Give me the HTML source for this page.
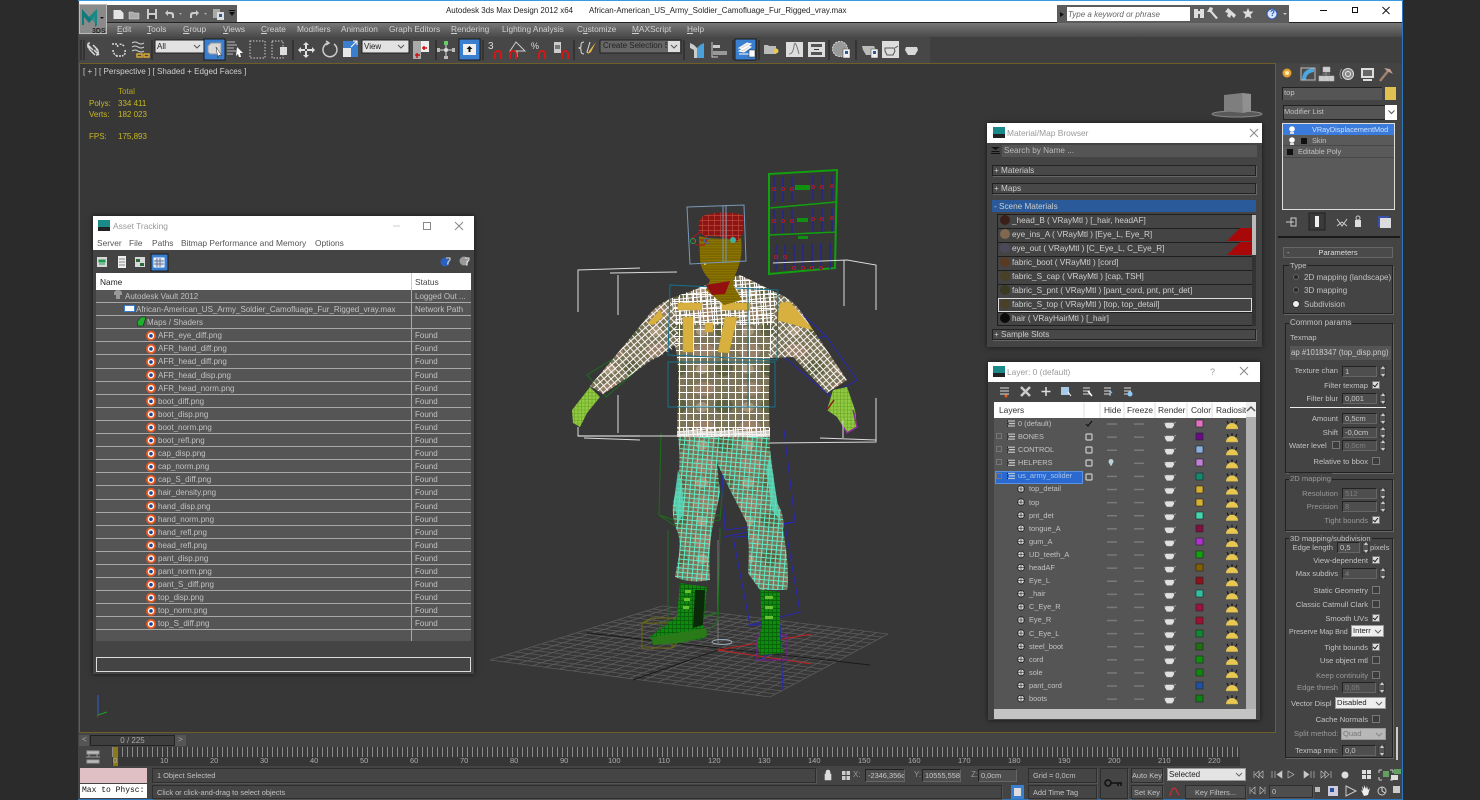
<!DOCTYPE html>
<html><head><meta charset="utf-8"><title>3ds Max</title>
<style>
html,body{margin:0;padding:0;width:1480px;height:800px;overflow:hidden;background:#2b2b2b;font:8px "Liberation Sans",sans-serif;color:#c2c2c2}
#all{position:absolute;left:0;top:0;width:1480px;height:800px;overflow:hidden;filter:blur(.25px)}
.a,.t,.b{position:absolute}
.t{white-space:nowrap;line-height:12px}
.b{box-sizing:border-box}
.r{text-align:right}
.inp{position:absolute;box-sizing:border-box;background:#4e4e4e;border:1px solid #222;border-right-color:#666;border-bottom-color:#666;height:11px;line-height:9px;padding-left:2px;color:#c8c8c8;white-space:nowrap;overflow:hidden}
.dis{color:#808080}
.cb{position:absolute;box-sizing:border-box;width:8px;height:8px;background:#3c3c3c;border:1px solid #777}
.cb.on{background:#ddd;border-color:#777}
.cb.on:after{content:"";position:absolute;left:1px;top:0;width:2px;height:4px;border:solid #222;border-width:0 1px 1px 0;transform:rotate(40deg)}
.sp{position:absolute;width:7px;height:11px;box-sizing:border-box;background:#555;border:1px solid #3a3a3a}
.sp:before,.sp:after{content:"";position:absolute;left:1px;border:2px solid transparent}
.sp:before{top:-1px;border-bottom:3px solid #ccc;border-top:0}
.sp:after{bottom:-1px;border-top:3px solid #ccc;border-bottom:0}
.dd{position:absolute;box-sizing:border-box;background:#eee;border:1px solid #999;color:#222;height:12px;line-height:10px;padding-left:1px;white-space:nowrap;overflow:hidden}
.gr{position:absolute;box-sizing:border-box;border:1px solid #222;box-shadow:1px 1px 0 #666}
.win{position:absolute;background:#444;box-shadow:0 0 5px rgba(0,0,0,.6)}
.ti{position:absolute;left:0;right:0;top:0;background:#fff;color:#888}
.row{height:13.1px;line-height:12px;padding-top:1px;box-sizing:border-box;white-space:nowrap}
.ar .row{border-bottom:1px solid #a8a8a8}
.m{position:absolute;top:23px;line-height:12px;color:#d0d0d0;font-size:8.3px;white-space:nowrap}
.box{position:absolute;box-sizing:border-box;background:#454545;border:1px solid #2e2e2e;box-shadow:1px 1px 0 #555;line-height:14px;white-space:nowrap;font-size:7.4px}
#rp .t{margin-top:1px;font-size:7.6px}
#rp .dd,#rp .inp{font-size:7.6px}
#mb .t{margin-top:1px;font-size:8.2px}
#lr .row{font-size:7.4px}
.st{font-size:7.4px}
.tn{position:absolute;top:755px;color:#b0b0b0;font-size:7.5px;line-height:12px}
</style></head><body><div id="all">

<!-- window frame -->
<div class="b" style="left:78px;top:0;width:1325px;height:800px;background:#444;border-top:1px solid #3a9ae0;border-right:1px solid #2a78c0;border-bottom:1px solid #2a78c0"></div>
<div class="a" style="left:79px;top:1px;width:1323px;height:21px;background:#fff"></div>
<div class="a" style="left:79px;top:22px;width:1323px;height:1px;background:#222"></div>
<div class="a" style="left:79px;top:23px;width:1323px;height:14px;background:linear-gradient(#777,#4a4a4a)"></div>
<div class="a" style="left:79px;top:37px;width:1323px;height:26px;background:#3f3f3f"></div>
<div class="a" style="left:79px;top:37px;width:851px;height:26px;background:#474747"></div>
<div class="a" style="left:79px;top:63px;width:1197px;height:670px;background:#373737;border:1px solid #6e5e28;box-sizing:border-box"></div>
<div class="a" style="left:1276px;top:63px;width:126px;height:697px;background:#444"></div>
<!-- timeline -->
<div class="a" style="left:79px;top:734px;width:1197px;height:13px;background:#444"></div>
<div class="a" style="left:79px;top:747px;width:1197px;height:20px;background:#444"></div>
<div class="a" style="left:112px;top:747px;width:1128px;height:19px;background:repeating-linear-gradient(90deg,#8a8a8a 0 1px,#3a3a3a 1px 5px) 0 0/100% 10px no-repeat,#363636"></div>

<!-- main svg: toolbar icons + viewport -->
<svg class="a" style="left:0;top:0" width="1480" height="800" viewBox="0 0 1480 800">
<defs>
<pattern id="sg" width="7" height="7" patternUnits="userSpaceOnUse"><path d="M0 .5H7M.5 0V7" stroke="#fff" stroke-width="1.100" fill="none"/></pattern>
<pattern id="sd" width="4.500" height="4" patternUnits="userSpaceOnUse" patternTransform="rotate(-6)"><path d="M0 .5H4.500M.5 0V4" stroke="#fff" stroke-width="1" fill="none"/></pattern>
<pattern id="sl" width="5" height="5" patternUnits="userSpaceOnUse" patternTransform="rotate(-42)"><path d="M0 .5H5M.5 0V5" stroke="#fff" stroke-width=".9" fill="none"/></pattern>
<pattern id="sr" width="5" height="5" patternUnits="userSpaceOnUse" patternTransform="rotate(48)"><path d="M0 .5H5M.5 0V5" stroke="#fff" stroke-width=".9" fill="none"/></pattern>
<pattern id="camo" width="46" height="38" patternUnits="userSpaceOnUse"><rect width="46" height="38" fill="#7c7458"/><ellipse cx="14" cy="9" rx="11" ry="7" fill="#9a8068"/><ellipse cx="34" cy="26" rx="9" ry="8" fill="#5e6040"/><ellipse cx="12" cy="27" rx="6" ry="5" fill="#a89478"/></pattern>
<pattern id="pg" width="4.800" height="4.400" patternUnits="userSpaceOnUse" patternTransform="rotate(5)"><path d="M0 .5H4.800M.5 0V4.400" stroke="#60ecca" stroke-width="1" fill="none"/></pattern>
<pattern id="rg" width="6" height="5" patternUnits="userSpaceOnUse"><rect width="6" height="5" fill="#8c1414"/><path d="M0 .5H6M.5 0V5" stroke="#b84838" stroke-width=".7"/></pattern>
<pattern id="fg" width="2.500" height="2.500" patternUnits="userSpaceOnUse"><rect width="2.500" height="2.500" fill="#7c6600"/><path d="M0 .3H2.500" stroke="#9a8000" stroke-width=".5"/></pattern>
<pattern id="bg" width="4" height="4" patternUnits="userSpaceOnUse"><rect width="4" height="4" fill="#0c8c0c"/><path d="M0 .5H4M.5 0V4" stroke="#0a5a0a" stroke-width=".7"/></pattern>
<pattern id="hg" width="3.500" height="3.500" patternUnits="userSpaceOnUse"><rect width="3.500" height="3.500" fill="#90cc40"/><path d="M0 .5H3.500M.5 0V3.500" stroke="#6c9c28" stroke-width=".6"/></pattern>
</defs>

<!-- app button -->
<rect x="79.500" y="4.500" width="27" height="29" fill="#8a8a8a" stroke="#bbb"/>
<path d="M82 25V9l7 8 8-8v16l-2 2v-11l-6 7-5-6v8z" fill="#0e7a7a"/><path d="M89 17l8-8v16z" fill="#18908c" opacity=".7"/>
<path d="M100 17h4l-2 2z" fill="#111"/>
<rect x="107" y="5" width="130" height="17" fill="#5c5c5c"/>
<path d="M113.500 10h7l3 3v6h-10z" fill="#e4e4e4"/>
<path d="M129 12h4l1 1h5v6h-10z" fill="#aaa" stroke="#ddd" stroke-width=".5"/>
<rect x="147" y="9" width="10" height="10" fill="#ccc"/><rect x="149" y="9" width="6" height="4" fill="#555"/><rect x="149" y="15" width="6" height="4" fill="#444"/>
<path d="M165 13l3-3v2h3q3 0 3 3v3h-2v-2q0-2-2-2h-2v2z" fill="#ccc"/><path d="M179 13h3l-1.500 2z" fill="#aaa"/>
<path d="M199 13l-3-3v2h-3q-3 0-3 3v3h2v-2q0-2 2-2h2v2z" fill="#ccc"/><path d="M204 13h3l-1.500 2z" fill="#aaa"/>
<rect x="213" y="9" width="7" height="9" fill="#aaa"/><rect x="217" y="12" width="7" height="8" fill="#ddd"/><rect x="219" y="14" width="3" height="3" fill="#2a5a9a"/>
<path d="M229 10h6v1h-6zM229 12h6l-3 4z" fill="#111"/>
<path d="M84 40V60" stroke="#222"/><path d="M81 40V60" stroke="#222"/>
<!-- toolbar -->
<g fill="none" stroke="#d8d8d8" stroke-width="1.500">
<path d="M88 45l5 5M93 45l5 5M90 43q-3 0-2 4l2 2M96 55q3 0 2-4l-2-2M94 50l5 5 M89 49l6 6"/>
<path d="M112 44h5l1 3M116 56h5M124 46q-3-3-5-1M113 50q0 4 4 6M125 50q1 5-3 6" stroke-dasharray="2 1"/>
<path d="M132 43q3-2 6 0t6 0M132 47q3-2 6 0t6 0M132 51q3-2 6 0t6 0" stroke-width="1"/>
</g>
<path d="M137 54h5v3h-5zM144 54h5v3h-5z" fill="none" stroke="#d8a830" stroke-width="1.500"/>
<path d="M152 40V60" stroke="#222"/>
<rect x="155" y="40" width="50" height="13" fill="#e2e2e2" stroke="#222"/><path d="M194 45l3 3 3-3" fill="none" stroke="#555"/>
<rect x="204" y="39" width="21" height="21" fill="#3a7ed0" stroke="#1a1a1a"/>
<path d="M208 46l3-3h10v11h-11l-2-2z" fill="#d8d8d8" stroke="#999"/><path d="M216 47l6 9-3-1-1 3z" fill="#fff" stroke="#222" stroke-width=".5"/>
<path d="M227 42h8M227 45h10M227 48h7M227 51h9M227 54h6" stroke="#bbb"/><path d="M237 47l6 6-3 0 1 4-2 0-1-3-2 2z" fill="#fff"/>
<rect x="250" y="41" width="15" height="17" fill="none" stroke="#ccc" stroke-dasharray="1.500 1.500"/>
<rect x="272" y="41" width="11" height="17" fill="none" stroke="#ccc" stroke-dasharray="1.500 1.500"/><path d="M280 47h7v8h-7z" fill="#ddd"/>
<path d="M293 40V60" stroke="#222"/>
<g fill="#e0e0e0"><path d="M306 42l3 3h-2v4h-2v-4h-2zM306 58l3-3h-2v-4h-2v4h-2zM298 50l3-3v2h4v2h-4v2z"/><path d="M315 50l-3-3v2h-5v2h5v2z"/></g>
<path d="M334 44a7 7 0 1 1-6-1M326 41l3 2-3 2" fill="none" stroke="#ccc" stroke-width="1.500"/>
<rect x="343" y="41" width="15" height="16" fill="#3a7ed0"/><rect x="343" y="48" width="8" height="9" fill="#e8e8e8"/><path d="M351 47l6-6M353 41h4v4" stroke="#fff" fill="none"/>
<rect x="362" y="40" width="47" height="13" fill="#e2e2e2" stroke="#222"/><path d="M398 45l3 3 3-3" fill="none" stroke="#555"/>
<rect x="413" y="41" width="8" height="18" fill="#aaa"/><rect x="421" y="41" width="8" height="11" fill="#eee"/><path d="M417 53v5M415 55h5M424 46v4M422 48h5" stroke="#d01010" stroke-width="1.500"/>
<path d="M436 40V60" stroke="#222"/>
<path d="M446 42v16M438 50h16" stroke="#ddd"/><rect x="444" y="41" width="4" height="4" fill="#6c6"/><circle cx="446" cy="50" r="2" fill="#ddd"/><rect x="444" y="56" width="4" height="3" fill="#bbb"/><rect x="437" y="48" width="3" height="4" fill="#bbb"/><rect x="452" y="48" width="3" height="4" fill="#bbb"/>
<rect x="459" y="39" width="21" height="21" fill="#3a7ed0" stroke="#1a1a1a"/><rect x="463" y="44" width="13" height="11" fill="#eee"/><path d="M469.500 46l3 3h-2v3h-2v-3h-2z" fill="#111"/>
<path d="M483 40V60" stroke="#222"/>
<text x="488" y="49" fill="#ddd" font-size="10" font-family="Liberation Sans">3</text><path d="M495 59v-5a3 3 0 0 1 6 0v5" fill="none" stroke="#d01818" stroke-width="2"/>
<path d="M516 42l-6 9h15zM517 51v6" fill="none" stroke="#ccc"/><path d="M510 59v-5a3 3 0 0 1 6 0v5" fill="none" stroke="#d01818" stroke-width="2"/>
<text x="531" y="49" fill="#ddd" font-size="9" font-family="Liberation Sans">%</text><path d="M539 59v-5a3 3 0 0 1 6 0v5" fill="none" stroke="#d01818" stroke-width="2"/>
<rect x="554" y="42" width="7" height="11" fill="#ccc"/><path d="M555 46h5M555 48h5" stroke="#222"/><path d="M562 59v-5a3 3 0 0 1 6 0v5" fill="none" stroke="#d01818" stroke-width="2"/>
<path d="M574 40V60" stroke="#222"/>
<path d="M584 42q-3 0-3 3v2l-2 1 2 1v2q0 3 3 3M590 42l-3 10 1 1" fill="none" stroke="#ddd"/><path d="M596 42l-7 9-1 3 3-2z" fill="#e8b840"/>
<rect x="600" y="40" width="81" height="13" fill="#666" stroke="#222"/><rect x="668" y="41" width="12" height="11" fill="#ddd"/><path d="M671 45l3 3 3-3" fill="none" stroke="#555"/>
<path d="M684 40V60" stroke="#222"/>
<path d="M690 43l4 2 3 3v10h-3v-8l-4-2z" fill="#ccc"/><path d="M704 43l-4 2-3 3v10h7z" fill="#4aa0d8"/>
<path d="M712 42v15h6" fill="none" stroke="#ccc"/><rect x="713" y="45" width="7" height="3" fill="#ccc"/><rect x="713" y="51" width="14" height="4" fill="#999"/>
<path d="M733 40V60" stroke="#222"/>
<rect x="735" y="39" width="21" height="21" fill="#3a7ed0" stroke="#1a1a1a"/><path d="M739 48l8-5 4 1-7 5zM739 51l8-5 4 1-7 5zM739 54h12" stroke="#fff" fill="#ddd"/><rect x="749" y="50" width="6" height="7" fill="#fff" stroke="#222" stroke-width=".5"/>
<path d="M759 40V60" stroke="#222"/>
<path d="M764 45h4l1 1h7v8h-12z" fill="#bbb"/><circle cx="776" cy="51" r="2.500" fill="#e8c850"/>
<rect x="786" y="42" width="17" height="15" fill="#ddd"/><path d="M789 54q4 0 5-8t5 8" fill="none" stroke="#777"/>
<rect x="808" y="42" width="17" height="15" fill="#ddd"/><rect x="811" y="44" width="11" height="3" fill="#555"/><rect x="811" y="52" width="11" height="3" fill="#555"/><path d="M814 49.500h5" stroke="#333"/>
<path d="M829 40V60" stroke="#222"/>
<circle cx="840" cy="49" r="7.500" fill="#9a9a9a" stroke="#ddd" stroke-dasharray="2 1"/><rect x="843" y="49" width="7" height="9" fill="#eee" stroke="#444" stroke-width=".5"/><rect x="845" y="51" width="3" height="3" fill="#2a5a9a"/>
<path d="M856 40V60" stroke="#222"/>
<path d="M862 46h12l2 4-3 5h-7l-3-5z" fill="#bbb"/><rect x="871" y="49" width="7" height="9" fill="#eee" stroke="#444" stroke-width=".5"/><rect x="873" y="51" width="3" height="3" fill="#2a5a9a"/>
<rect x="882" y="41" width="17" height="17" fill="#ddd"/><path d="M885 48h9l1 3-2 4h-6l-2-4zM895 48l3-2" fill="none" stroke="#555"/>
<path d="M906 47h11l1 3-3 5h-7l-3-5zM918 48l3-2" fill="#d8d8d8"/>
<!-- view cube -->
<ellipse cx="1237" cy="114" rx="25" ry="3" fill="#5a5a5a" stroke="#8a8a8a"/>
<path d="M1224 95l18-2 9 1v17l-8 2-19-2z" fill="#7e7e7e"/><path d="M1242 93l9 1v17l-8 2z" fill="#909090"/>
<!-- axes bottom left -->
<path d="M98 715V695" stroke="#3060d0"/><path d="M98 715l9-3" stroke="#20a020"/><path d="M98 715l-1 2" stroke="#c03030"/>

<!-- floor -->
<g stroke="#5c5c5c" stroke-width=".8" fill="none">
<path d="M490 660L770 697M507 655L782 691M524 649L794 684M542 644L805 678M559 638L817 672M576 633L829 665M593 628L841 659M610 622L853 653M628 617L864 647M645 611L876 640M662 606L888 634M498 657L776 694M516 652L788 687M533 647L800 681M550 641L811 675M567 636L823 669M585 630L835 662M602 625L847 656M619 620L858 650M636 614L870 643M653 609L882 637"/>
<path d="M490 660L662 606M518 664L685 609M546 667L707 612M574 671L730 614M602 675L752 617M630 678L775 620M658 682L798 623M686 686L820 626M714 690L843 628M742 693L865 631M770 697L888 634M504 662L673 607M532 666L696 610M560 669L718 613M588 673L741 616M616 677L764 618M644 680L786 621M672 684L809 624M700 688L832 627M728 691L854 630M756 695L876 633"/>
</g>
<path d="M587 633L870 665M633 680L718 650" stroke="#1a1a1a" fill="none"/>
<path d="M718 650L812 634M718 650L812 664" stroke="#c02020" fill="none"/>
<path d="M718 540V643" stroke="#777" fill="none"/>
<ellipse cx="722" cy="642" rx="10" ry="2.500" fill="none" stroke="#9ab"/>

<!-- bone boxes -->
<g fill="none" stroke="#1c6e1c" stroke-width="1">
<path d="M661 433L659 515 677 527 720 520 727 433M659 515L697 528M677 527L720 515"/>
<path d="M668 530V625L700 640 718 620 720 528M668 630L718 612M652 640L662 623 720 613"/>
<path d="M626 351L648 318 666 345 606 397 587 375 626 351M648 318L666 345"/>
</g>
<g fill="none" stroke="#2828b0" stroke-width="1">
<path d="M720 435L725 530 795 522 784 430M724 537L795 522M733 537L780 535"/>
<path d="M733 537L750 625 800 612 785 525M748 625L780 625 783 690M760 660L784 645"/>
<path d="M785 298L826 336 857 380 830 396 770 345 775 300M795 343L826 336"/>
</g>
<path d="M642 623h30v25h-30zM642 623l10-5h30v20l-10 10" fill="none" stroke="#6a6a10"/>
<path d="M757 635h30v25h-30z" fill="none" stroke="#7a1a9a"/>

<!-- legs -->
<path d="M678 436Q682 470 675 495Q670 510 676 528Q682 540 678 560L675 577Q690 584 710 580Q708 555 712 530L720 493 717 463 722 436z" fill="url(#camo)"/>
<path d="M678 436Q682 470 675 495Q670 510 676 528Q682 540 678 560L675 577Q690 584 710 580Q708 555 712 530L720 493 717 463 722 436z" fill="url(#pg)"/>
<path d="M722 436L717 463 730 490 747 523Q750 550 748 573L760 590 787 590Q790 570 783 530Q785 515 777 503L770 450 770 436z" fill="url(#camo)"/>
<path d="M722 436L717 463 730 490 747 523Q750 550 748 573L760 590 787 590Q790 570 783 530Q785 515 777 503L770 450 770 436z" fill="url(#pg)"/>
<path d="M678 470l-4 30 4 24 6-12-2-30zM770 455l7 45 4 22-9-12-6-40z" fill="#55dcbc" opacity=".8"/>
<!-- boots -->
<path d="M680 583L707 587 703 627 707 637 680 643 653 645 650 637 677 617z" fill="url(#bg)"/>
<path d="M695 590L705 590 703 625 693 628z" fill="#0a2a0a"/>
<path d="M652 637L706 628 707 636 680 643 653 645z" fill="#2a7a1a"/>
<path d="M760 590L780 592 780 637 783 653 760 655 757 643 762 627z" fill="url(#bg)"/>
<path d="M685 590h6v3h-6zM684 598h6v3h-6zM683 606h6v3h-6zM765 596h8v3h-8zM765 606h8v3h-8zM765 616h8v3h-8z" fill="#66c030"/>
<!-- torso & arms -->
<path d="M706 285Q690 292 672 298Q655 305 645 320L612 360 590 386 603 394Q625 380 647 363L675 345Q680 370 678 400L677 437H770Q768 400 770 358L793 357 827 393 847 380 805 318Q795 300 777 293L740 275z" fill="url(#camo)"/>
<path d="M672 298Q655 305 645 320L612 360 590 386 603 394Q625 380 647 363L680 345z" fill="url(#sl)"/>
<path d="M777 293Q795 300 805 318L847 380 827 393 793 357 768 358z" fill="url(#sr)"/>
<path d="M672 298L675 345Q680 370 678 400L677 437H770Q768 400 770 358L777 293 740 275 706 285z" fill="url(#sg)"/>
<path d="M672 300L706 285 726 298 740 275 777 293 772 325 676 325z" fill="url(#sd)"/>
<path d="M677 428h93v9h-93z" fill="url(#sd)"/>
<path d="M677 431h93v6h-93z" fill="#eee" opacity=".7"/>
<g fill="#d8b040" stroke="#c8a030" stroke-width=".5">
<path d="M678 303h24v7h-24zM722 303h28v7h-28zM683 317h10v35h-10zM718 352l7-35h12l-8 36zM705 323h8v9h-8zM648 323l12-13 3 7-10 8zM780 303l10-1 23 28-36-10z"/>
</g>
<!-- torso boxes -->
<g fill="none" stroke="#16708a" stroke-width="1">
<path d="M670 285L778 290 777 360 668 355zM748 285V357M668 362H775V407H668zM748 362V407"/>
</g>
<!-- hands -->
<path d="M590 387L600 397 587 413 580 427 573 423 572 410z" fill="url(#hg)"/>
<path d="M833 390L847 387 855 410 857 427 847 433 837 417 827 410z" fill="url(#hg)"/>
<path d="M853 410L857 427 847 433 842 425" fill="none" stroke="#8a2a9a" stroke-width="1.500"/><path d="M827 410L834 400" stroke="#8a1a1a" stroke-width="1.500"/>
<!-- head -->
<path d="M699 236Q710 240 741 238Q743 255 738 268Q733 280 733 285L742 300 724 305 706 290 710 280Q700 270 700 258z" fill="url(#fg)"/>
<path d="M706 285L730 281 725 294 712 295z" fill="#941010"/>
<path d="M699 232Q697 218 705 215Q725 210 743 215L743 233 737 242Q720 235 705 236z" fill="url(#rg)"/>
<path d="M692 238l8-6 8 6-4 7h-8zM700 240h6" fill="none" stroke="#b01818"/>
<circle cx="693" cy="241" r="2.500" fill="none" stroke="#20a050"/><circle cx="707" cy="241" r="2.500" fill="none" stroke="#2a70c0"/><circle cx="733" cy="240" r="3" fill="#40b0a0"/>
<circle cx="705" cy="264" r="1" fill="#e8e040"/>
<path d="M687 207L744 205 746 261 690 264zM723 206V262M726 205V262" fill="none" stroke="#7a99b8" stroke-width="1"/>
<!-- rig panel -->
<path d="M769 174L837 170 835 268 769 274z" fill="none" stroke="#10a010" stroke-width="2"/>
<path d="M770 208L836 202M770 235L836 232" stroke="#10a010" stroke-width="1.500"/>
<path d="M774 177V202M783 177V202M792 177V202M813 175V200M822 175V200M832 175V200M774 210V233M783 210V233M792 210V233M813 208V232M822 208V232M832 208V232M776 245V270M785 245V270M794 245V270M803 244V269M812 244V269M821 243V269M830 243V269" stroke="#1818c0" stroke-width="1"/>
<g fill="none" stroke="#b02020"><circle cx="774" cy="189" r="1.500"/><circle cx="783" cy="189" r="1.500"/><circle cx="792" cy="189" r="1.500"/><circle cx="813" cy="187" r="1.500"/><circle cx="822" cy="187" r="1.500"/><circle cx="832" cy="186" r="1.500"/><circle cx="774" cy="221" r="1.500"/><circle cx="783" cy="221" r="1.500"/><circle cx="792" cy="221" r="1.500"/><circle cx="813" cy="219" r="1.500"/><circle cx="822" cy="219" r="1.500"/><circle cx="832" cy="218" r="1.500"/><circle cx="776" cy="257" r="1.500"/><circle cx="785" cy="257" r="1.500"/><circle cx="794" cy="268" r="1.500"/><circle cx="803" cy="268" r="1.500"/><circle cx="812" cy="268" r="1.500"/><circle cx="821" cy="268" r="1.500"/></g>
<path d="M795 185h15v5h-15zM797 218h11v4h-11zM798 236h10v3h-10z" fill="#109010"/>
<!-- white frames -->
<g fill="none" stroke="#dcdcdc" stroke-width="1">
<path d="M578 312V270L640 268M610 273L677 272M618 275V315M618 395V433M578 427V436H677M584 438L640 440"/>
<path d="M773 263L847 260 876 265V310M844 260V306M876 398V442L770 443M876 440L820 438M843 420V438"/>
</g>
<path d="M578 436H640" stroke="#fff"/>

<!-- command panel icons -->
<rect x="1300" y="64" width="20" height="18" fill="#4c4c4c"/>
<circle cx="1287" cy="73" r="4.500" fill="#e8a030"/><circle cx="1287" cy="73" r="2" fill="#fff0b0"/>
<path d="M1302 80q0-11 12-12v4q-8 1-8 8z" fill="#4aa8e0"/><rect x="1301" y="68" width="14" height="12" fill="none" stroke="#bbb"/>
<path d="M1323 67h7v5h-7zM1319 76h5v5h-5zM1324 76h5v5h-5zM1329 76h5v5h-5zM1326 72v4M1322 74h8" fill="#ccc" stroke="#bbb" stroke-width=".5"/>
<circle cx="1348" cy="74" r="5.500" fill="#888" stroke="#ddd"/><circle cx="1348" cy="74" r="2.500" fill="none" stroke="#eee"/><path d="M1340 74a3 6 0 0 1 2-5M1340 74a3 6 0 0 0 2 5" fill="none" stroke="#888"/>
<rect x="1361" y="68" width="13" height="10" fill="#ddd"/><rect x="1363" y="70" width="9" height="6" fill="#666"/><path d="M1363 80h9" stroke="#ddd" stroke-width="2"/>
<path d="M1380 81l8-10" stroke="#a08070" stroke-width="2.500"/><path d="M1384 68l6 1 3 5-6-3z" fill="#c0a090"/>
<!-- stack icons -->
<path d="M1286 222h8M1291 218v8h5v-8z" fill="none" stroke="#ccc"/>
<rect x="1309" y="213" width="16" height="17" fill="#3a3a3a" stroke="#222"/><rect x="1315" y="216" width="4" height="11" fill="#eee"/>
<path d="M1337 219l5 7 5-7M1337 226l5-4 5 4" fill="none" stroke="#ccc"/>
<path d="M1355 220h6v7h-6z" fill="#ddd"/><circle cx="1358" cy="218" r="2" fill="none" stroke="#ccc"/>
<rect x="1378" y="216" width="11" height="11" fill="#3a50a8"/><rect x="1380" y="218" width="11" height="10" fill="#ddd"/>
<path d="M1278 237H1400" stroke="#1a1a1a" stroke-width="2"/>
<path d="M1397 727V760" stroke="#ccc" stroke-width="2"/>

<!-- search bar -->
<rect x="1057" y="5" width="232" height="18" fill="#5c5c5c"/>
<rect x="1067" y="7" width="123" height="14" fill="#fff"/>
<path d="M1060 12l4 2.500-4 2.500z" fill="#111"/>
<g fill="#ddd">
<path d="M1194 9h4v9h-4zM1200 9h4v9h-4zM1197 11h4v3h-4z"/>
<path d="M1210 7l3 1-1 3 6 7-2 1-6-7-3 0z"/>
<path d="M1228 8l8 7-2 3-3-3-1 3-3-2 1-3-3-1z"/>
<path d="M1248 8l1.500 3.500 4 0-3 3 1 4-3.500-2-3.500 2 1-4-3-3 4 0z"/>
</g>
<circle cx="1272" cy="14" r="5" fill="#d8e4f8" stroke="#2a5ab0"/><path d="M1283 13h4l-2 2z" fill="#ccc"/>
<!-- win controls -->
<path d="M1320 10.500h7" stroke="#111"/><rect x="1352.500" y="7.500" width="5" height="5" fill="none" stroke="#111"/><path d="M1382.500 7l7 7M1389.500 7l-7 7" stroke="#111"/>
</svg>

<!-- title -->
<div class="t" style="left:446px;top:5px;color:#222;font-size:7.95px">Autodesk 3ds Max Design 2012 x64</div>
<div class="t" style="left:589px;top:5px;color:#222;font-size:7.95px">African-American_US_Army_Soldier_Camofluage_Fur_Rigged_vray.max</div>
<div class="t" style="left:92px;top:26px;color:#222;font-size:7px;font-weight:bold">3DS</div>
<div class="t" style="left:1068px;top:9px;color:#666;font-style:italic;font-size:8px">Type a keyword or phrase</div>
<div class="t" style="left:1270px;top:8px;color:#2a5ab0;font-weight:bold;font-size:8px">?</div>

<!-- menus -->
<div class="m" style="left:117px"><u>E</u>dit</div><div class="m" style="left:147px"><u>T</u>ools</div><div class="m" style="left:183px"><u>G</u>roup</div><div class="m" style="left:223px"><u>V</u>iews</div><div class="m" style="left:261px"><u>C</u>reate</div><div class="m" style="left:297px">Modifiers</div><div class="m" style="left:341px">Animation</div><div class="m" style="left:389px">Graph Editors</div><div class="m" style="left:451px"><u>R</u>endering</div><div class="m" style="left:502px">Lighting Analysis</div><div class="m" style="left:577px">C<u>u</u>stomize</div><div class="m" style="left:632px"><u>M</u>AXScript</div><div class="m" style="left:687px"><u>H</u>elp</div>

<div class="t" style="left:157px;top:41px;color:#222">All</div>
<div class="t" style="left:364px;top:41px;color:#222">View</div>
<div class="t" style="left:603px;top:40px;color:#222;width:64px;overflow:hidden">Create Selection Set</div>

<!-- viewport labels -->
<div class="t" style="left:83px;top:66px;color:#d0d0d0;font-size:8.1px">[ + ] [ Perspective ] [ Shaded + Edged Faces ]</div>
<div class="t" style="left:118px;top:86px;color:#b8a818">Total</div>
<div class="t" style="left:89px;top:98px;color:#c8b820">Polys:</div><div class="t" style="left:118px;top:98px;color:#c8b820">334 411</div>
<div class="t" style="left:89px;top:109px;color:#c8b820">Verts:</div><div class="t" style="left:118px;top:109px;color:#c8b820">182 023</div>
<div class="t" style="left:89px;top:131px;color:#c8b820">FPS:</div><div class="t" style="left:118px;top:131px;color:#c8b820">175,893</div>

<!-- ASSET TRACKING -->
<div class="win" style="left:93px;top:216px;width:381px;height:458px">
 <div class="ti" style="height:34px"></div>
 <div class="t" style="left:20px;top:4px;color:#999;font-size:8.4px">Asset Tracking</div>
 <div class="t" style="left:4px;top:21px;color:#555;font-size:8.4px">Server</div>
 <div class="t" style="left:36px;top:21px;color:#555;font-size:8.4px">File</div>
 <div class="t" style="left:59px;top:21px;color:#555;font-size:8.4px">Paths</div>
 <div class="t" style="left:88px;top:21px;color:#555;font-size:8.4px">Bitmap Performance and Memory</div>
 <div class="t" style="left:222px;top:21px;color:#555;font-size:8.4px">Options</div>
 <div class="a" style="left:3px;top:57px;width:375px;height:17px;background:#fff"></div>
 <div class="t" style="left:7px;top:60px;color:#222;font-size:8.4px">Name</div>
 <div class="t" style="left:322px;top:60px;color:#444;font-size:8.4px">Status</div>
 <div class="a" style="left:318px;top:57px;width:1px;height:17px;background:#ccc"></div>
 <div class="a ar" style="left:3px;top:74px;width:375px;height:351px;background:#555;overflow:hidden">
  <div class="a" style="left:315px;top:0;width:1px;height:351px;background:#a8a8a8"></div>
  <div class="a" style="left:0;top:0;width:375px">
  <div class="row" style="padding-left:29px">Autodesk Vault 2012</div>
  <div class="row" style="padding-left:40px">African-American_US_Army_Soldier_Camofluage_Fur_Rigged_vray.max</div>
  <div class="row" style="padding-left:51px">Maps / Shaders</div>
  <div class="row" style="padding-left:62px">AFR_eye_diff.png</div>
  <div class="row" style="padding-left:62px">AFR_hand_diff.png</div>
  <div class="row" style="padding-left:62px">AFR_head_diff.png</div>
  <div class="row" style="padding-left:62px">AFR_head_disp.png</div>
  <div class="row" style="padding-left:62px">AFR_head_norm.png</div>
  <div class="row" style="padding-left:62px">boot_diff.png</div>
  <div class="row" style="padding-left:62px">boot_disp.png</div>
  <div class="row" style="padding-left:62px">boot_norm.png</div>
  <div class="row" style="padding-left:62px">boot_refl.png</div>
  <div class="row" style="padding-left:62px">cap_disp.png</div>
  <div class="row" style="padding-left:62px">cap_norm.png</div>
  <div class="row" style="padding-left:62px">cap_S_diff.png</div>
  <div class="row" style="padding-left:62px">hair_density.png</div>
  <div class="row" style="padding-left:62px">hand_disp.png</div>
  <div class="row" style="padding-left:62px">hand_norm.png</div>
  <div class="row" style="padding-left:62px">hand_refl.png</div>
  <div class="row" style="padding-left:62px">head_refl.png</div>
  <div class="row" style="padding-left:62px">pant_disp.png</div>
  <div class="row" style="padding-left:62px">pant_norm.png</div>
  <div class="row" style="padding-left:62px">pant_S_diff.png</div>
  <div class="row" style="padding-left:62px">top_disp.png</div>
  <div class="row" style="padding-left:62px">top_norm.png</div>
  <div class="row" style="padding-left:62px">top_S_diff.png</div>
  </div>
  <div class="a" style="left:319px;top:0;width:56px;overflow:hidden">
  <div class="row">Logged Out ...</div><div class="row">Network Path</div><div class="row"></div>
  <div class="row">Found</div><div class="row">Found</div><div class="row">Found</div><div class="row">Found</div><div class="row">Found</div><div class="row">Found</div><div class="row">Found</div><div class="row">Found</div><div class="row">Found</div><div class="row">Found</div><div class="row">Found</div><div class="row">Found</div><div class="row">Found</div><div class="row">Found</div><div class="row">Found</div><div class="row">Found</div><div class="row">Found</div><div class="row">Found</div><div class="row">Found</div><div class="row">Found</div><div class="row">Found</div><div class="row">Found</div><div class="row">Found</div>
  </div>
 </div>
 <div class="a" style="left:3px;top:441px;width:375px;height:15px;box-sizing:border-box;border:1px solid #ddd;background:#444"></div>
</div>

<!-- MATERIAL BROWSER -->
<div class="win" id="mb" style="left:987px;top:123px;width:275px;height:224px">
 <div class="ti" style="height:20px"></div>
 <div class="t" style="left:20px;top:3px;color:#999;font-size:8.4px">Material/Map Browser</div>
 <div class="a" style="left:15px;top:22px;width:255px;height:12px;background:#555"></div>
 <div class="t" style="left:17px;top:21px;color:#bbb">Search by Name ...</div>
 <div class="gr" style="left:5px;top:42px;width:264px;height:11px;background:#484848"></div><div class="t" style="left:7px;top:41px;color:#ccc">+ Materials</div>
 <div class="gr" style="left:5px;top:60px;width:264px;height:11px;background:#484848"></div><div class="t" style="left:7px;top:59px;color:#ccc">+ Maps</div>
 <div class="a" style="left:5px;top:77px;width:264px;height:12px;background:#2a5a9a"></div><div class="t" style="left:7px;top:77px;color:#ccc">- Scene Materials</div>
 <div class="a" style="left:10px;top:91px;width:255px;height:112px;background:#1e1e1e"></div>
 <div class="a" style="left:11px;top:92px;width:254px;height:13px;background:#444"></div>
 <div class="a" style="left:11px;top:106px;width:254px;height:13px;background:#444"></div>
 <div class="a" style="left:11px;top:120px;width:254px;height:13px;background:#444"></div>
 <div class="a" style="left:11px;top:134px;width:254px;height:13px;background:#444"></div>
 <div class="a" style="left:11px;top:148px;width:254px;height:13px;background:#444"></div>
 <div class="a" style="left:11px;top:162px;width:254px;height:13px;background:#444"></div>
 <div class="b" style="left:11px;top:175px;width:254px;height:14px;background:#444;border:1px solid #ddd"></div>
 <div class="a" style="left:11px;top:190px;width:254px;height:12px;background:#444"></div>
 <div class="a" style="left:265px;top:91px;width:4px;height:112px;background:#333"></div>
 <div class="a" style="left:265px;top:92px;width:4px;height:40px;background:#bbb"></div>
 <div class="t" style="left:25px;top:91px;color:#d0d0d0">_head_B ( VRayMtl ) [_hair, headAF]</div>
 <div class="t" style="left:25px;top:105px;color:#d0d0d0">eye_ins_A ( VRayMtl ) [Eye_L, Eye_R]</div>
 <div class="t" style="left:25px;top:119px;color:#d0d0d0">eye_out ( VRayMtl ) [C_Eye_L, C_Eye_R]</div>
 <div class="t" style="left:25px;top:133px;color:#d0d0d0">fabric_boot ( VRayMtl ) [cord]</div>
 <div class="t" style="left:25px;top:147px;color:#d0d0d0">fabric_S_cap ( VRayMtl ) [cap, TSH]</div>
 <div class="t" style="left:25px;top:161px;color:#d0d0d0">fabric_S_pnt ( VRayMtl ) [pant_cord, pnt, pnt_det]</div>
 <div class="t" style="left:25px;top:175px;color:#d0d0d0">fabric_S_top ( VRayMtl ) [top, top_detail]</div>
 <div class="t" style="left:25px;top:189px;color:#d0d0d0">hair ( VRayHairMtl ) [_hair]</div>
 <div class="gr" style="left:5px;top:206px;width:264px;height:11px;background:#484848"></div><div class="t" style="left:7px;top:205px;color:#ccc">+ Sample Slots</div>
</div>

<!-- LAYER -->
<div class="win" id="lr" style="left:988px;top:362px;width:272px;height:358px">
 <div class="ti" style="height:20px"></div>
 <div class="t" style="left:19px;top:4px;color:#999;font-size:8.4px">Layer: 0 (default)</div>
 <div class="t" style="left:222px;top:4px;color:#999;font-size:9px">?</div>
 <div class="a" style="left:6px;top:40px;width:252px;height:17px;background:#fff"></div>
 <div class="a" style="left:6px;top:56px;width:252px;height:291px;background:#555"></div>
 <div class="a" style="left:258px;top:40px;width:10px;height:15px;background:#eee"></div>
 <div class="a" style="left:258px;top:55px;width:10px;height:292px;background:#b0b0b0"></div>
 <div class="a" style="left:6px;top:347px;width:262px;height:10px;background:#c4c4c4"></div>
 <div class="t" style="left:11px;top:42px;color:#333;font-size:8.4px">Layers</div>
 <div class="t" style="left:116px;top:42px;color:#333;font-size:8.4px">Hide</div>
 <div class="t" style="left:139px;top:42px;color:#333;font-size:8.4px">Freeze</div>
 <div class="t" style="left:170px;top:42px;color:#333;font-size:8.4px">Render</div>
 <div class="t" style="left:203px;top:42px;color:#333;font-size:8.4px">Color</div>
 <div class="a" style="left:228px;top:42px;width:30px;overflow:hidden;color:#333;line-height:12px;font-size:8.4px">Radiosity</div>
 <div class="a" style="left:7px;top:109px;width:88px;height:13px;background:#2a6ad0;border:1px solid #5a90e0;box-sizing:border-box"></div>
 <div class="a" style="left:30px;top:55px;width:80px">
  <div class="row">0 (default)</div><div class="row">BONES</div><div class="row">CONTROL</div><div class="row">HELPERS</div><div class="row" style="color:#a8c4ec">us_army_solider</div>
  <div class="row" style="padding-left:11px">top_detail</div><div class="row" style="padding-left:11px">top</div><div class="row" style="padding-left:11px">pnt_det</div><div class="row" style="padding-left:11px">tongue_A</div><div class="row" style="padding-left:11px">gum_A</div><div class="row" style="padding-left:11px">UD_teeth_A</div><div class="row" style="padding-left:11px">headAF</div><div class="row" style="padding-left:11px">Eye_L</div><div class="row" style="padding-left:11px">_hair</div><div class="row" style="padding-left:11px">C_Eye_R</div><div class="row" style="padding-left:11px">Eye_R</div><div class="row" style="padding-left:11px">C_Eye_L</div><div class="row" style="padding-left:11px">steel_boot</div><div class="row" style="padding-left:11px">cord</div><div class="row" style="padding-left:11px">sole</div><div class="row" style="padding-left:11px">pant_cord</div><div class="row" style="padding-left:11px">boots</div>
 </div>
</div>

<!-- right panel top -->
<div class="a" style="left:1282px;top:87px;width:100px;height:13px;background:#555;border-top:1px solid #222;border-left:1px solid #222;box-sizing:border-box"></div>
<div class="t" style="left:1284px;top:87px;font-size:7.6px">top</div>
<div class="a" style="left:1385px;top:87px;width:11px;height:13px;background:#e0c050"></div>
<div class="a" style="left:1283px;top:105px;width:114px;height:15px;background:#555;border:1px solid #222;box-sizing:border-box"></div>
<div class="a" style="left:1385px;top:105px;width:12px;height:15px;background:#fff"></div>
<svg class="a" style="left:1388px;top:110px" width="7" height="5"><path d="M.5 .5l3 3 3-3" fill="none" stroke="#555"/></svg>
<div class="t" style="left:1284px;top:106px;font-size:7.4px">Modifier List</div>
<div class="b" style="left:1282px;top:123px;width:113px;height:87px;background:#5a5a5a;border:1px solid #ddd"></div>
<div class="a" style="left:1283px;top:124px;width:111px;height:11px;background:#3b7bdc"></div>
<div class="a" style="left:1283px;top:135px;width:111px;height:11px;border-bottom:1px solid #484848;box-sizing:border-box"></div>
<div class="a" style="left:1283px;top:146px;width:111px;height:12px;border-bottom:1px solid #484848;box-sizing:border-box"></div>
<div class="t" style="left:1312px;top:124px;color:#cfe0f8;font-size:7.3px">VRayDisplacementMod</div>
<div class="t" style="left:1312px;top:135px;font-size:7.4px">Skin</div>
<div class="t" style="left:1298px;top:146px;font-size:7.4px">Editable Poly</div>

<div id="rp">
<div class="b" style="left:1283px;top:247px;width:110px;height:11px;background:#4a4a4a;border:1px solid #666"></div>
<div class="t" style="left:1287px;top:246px">-</div>
<div class="t r" style="left:1283px;top:246px;width:110px;text-align:center;color:#ddd">Parameters</div>

<div class="gr" style="left:1283px;top:265px;width:110px;height:49px"></div>
<div class="t" style="left:1289px;top:259px;background:#444;padding:0 1px">Type</div>
<div class="a" style="left:1293px;top:274px;width:6px;height:6px;border-radius:50%;background:#2a2a2a;border:1px solid #666;box-sizing:border-box"></div>
<div class="a" style="left:1293px;top:287px;width:6px;height:6px;border-radius:50%;background:#2a2a2a;border:1px solid #666;box-sizing:border-box"></div>
<div class="a" style="left:1293px;top:301px;width:6px;height:6px;border-radius:50%;background:#eee;box-shadow:0 0 0 1px #333"></div>
<div class="t" style="left:1304px;top:271px;font-size:8px">2D mapping (landscape)</div>
<div class="t" style="left:1304px;top:284px;font-size:8px">3D mapping</div>
<div class="t" style="left:1304px;top:298px;font-size:8px">Subdivision</div>

<div class="gr" style="left:1285px;top:323px;width:108px;height:150px"></div>
<div class="t" style="left:1289px;top:316px;background:#444;padding:0 1px;font-size:8px">Common params</div>
<div class="t" style="left:1290px;top:331px">Texmap</div>
<div class="a" style="left:1290px;top:346px;width:101px;height:14px;background:#555;overflow:hidden;white-space:nowrap;line-height:13px;padding-left:1px;box-sizing:border-box;color:#ccc;font-size:7.8px">ap #1018347 (top_disp.png)</div>
<div class="t r" style="left:1280px;top:364px;width:58px">Texture chan</div><div class="inp" style="left:1342px;top:366px;width:35px">1</div><div class="sp" style="left:1379px;top:366px"></div>
<div class="t r" style="left:1300px;top:379px;width:68px">Filter texmap</div><div class="cb on" style="left:1372px;top:381px"></div>
<div class="t r" style="left:1280px;top:392px;width:58px">Filter blur</div><div class="inp" style="left:1342px;top:393px;width:35px">0,001</div><div class="sp" style="left:1379px;top:393px"></div>
<div class="a" style="left:1290px;top:407px;width:96px;height:1px;background:#eee"></div>
<div class="t r" style="left:1280px;top:412px;width:58px">Amount</div><div class="inp" style="left:1342px;top:413px;width:35px">0,5cm</div><div class="sp" style="left:1379px;top:413px"></div>
<div class="t r" style="left:1280px;top:426px;width:58px">Shift</div><div class="inp" style="left:1342px;top:427px;width:35px">-0,0cm</div><div class="sp" style="left:1379px;top:427px"></div>
<div class="t" style="left:1289px;top:439px">Water level</div><div class="cb" style="left:1332px;top:441px"></div><div class="inp dis" style="left:1342px;top:440px;width:35px">0,0cm</div><div class="sp" style="left:1379px;top:440px"></div>
<div class="t r" style="left:1290px;top:455px;width:78px">Relative to bbox</div><div class="cb" style="left:1372px;top:457px"></div>

<div class="gr" style="left:1285px;top:479px;width:108px;height:52px"></div>
<div class="t" style="left:1289px;top:472px;background:#444;padding:0 1px;color:#999">2D mapping</div>
<div class="t r dis" style="left:1280px;top:487px;width:58px;color:#999">Resolution</div><div class="inp dis" style="left:1342px;top:488px;width:35px">512</div><div class="sp" style="left:1379px;top:488px"></div>
<div class="t r dis" style="left:1280px;top:500px;width:58px;color:#999">Precision</div><div class="inp dis" style="left:1342px;top:501px;width:35px">8</div><div class="sp" style="left:1379px;top:501px"></div>
<div class="t r" style="left:1290px;top:514px;width:78px;color:#999">Tight bounds</div><div class="cb on" style="left:1372px;top:516px"></div>

<div class="gr" style="left:1285px;top:538px;width:108px;height:220px"></div>
<div class="t" style="left:1289px;top:532px;background:#444;padding:0 1px">3D mapping/subdivision</div>
<div class="t r" style="left:1280px;top:541px;width:53px">Edge length</div><div class="inp" style="left:1337px;top:542px;width:23px">0,5</div><div class="sp" style="left:1362px;top:542px"></div><div class="t" style="left:1370px;top:541px">pixels</div>
<div class="t r" style="left:1290px;top:554px;width:78px">View-dependent</div><div class="cb on" style="left:1372px;top:556px"></div>
<div class="t r" style="left:1280px;top:567px;width:58px">Max subdivs</div><div class="inp dis" style="left:1342px;top:568px;width:35px">4</div><div class="sp" style="left:1379px;top:568px"></div>
<div class="t r" style="left:1290px;top:584px;width:78px">Static Geometry</div><div class="cb" style="left:1372px;top:586px"></div>
<div class="t r" style="left:1290px;top:598px;width:78px">Classic Catmull Clark</div><div class="cb" style="left:1372px;top:600px"></div>
<div class="t r" style="left:1290px;top:612px;width:78px">Smooth UVs</div><div class="cb on" style="left:1372px;top:614px"></div>
<div class="t" style="left:1289px;top:625px;font-size:7.1px">Preserve Map Bnd</div><div class="dd" style="left:1351px;top:625px;width:33px">Interr</div>
<div class="t r" style="left:1290px;top:641px;width:78px">Tight bounds</div><div class="cb on" style="left:1372px;top:643px"></div>
<div class="t r" style="left:1290px;top:654px;width:78px">Use object mtl</div><div class="cb" style="left:1372px;top:656px"></div>
<div class="t r" style="left:1290px;top:669px;width:78px;color:#999">Keep continuity</div><div class="cb" style="left:1372px;top:671px"></div>
<div class="t r" style="left:1280px;top:681px;width:58px;color:#999">Edge thresh</div><div class="inp dis" style="left:1342px;top:682px;width:34px">0,05</div><div class="sp" style="left:1378px;top:682px"></div>
<div class="t" style="left:1291px;top:697px">Vector Displ</div><div class="dd" style="left:1335px;top:697px;width:51px">Disabled</div>
<div class="t r" style="left:1290px;top:713px;width:78px">Cache Normals</div><div class="cb" style="left:1372px;top:715px"></div>
<div class="t" style="left:1294px;top:727px;color:#999">Split method:</div><div class="dd" style="left:1341px;top:728px;width:45px;background:#b8b8b8;color:#777">Quad</div>
<div class="t r" style="left:1280px;top:744px;width:58px">Texmap min:</div><div class="inp" style="left:1342px;top:745px;width:34px">0,0</div><div class="sp" style="left:1378px;top:745px"></div>
</div>

<!-- timeline -->
<div class="a" style="left:79px;top:735px;width:10px;height:11px;background:#555"></div>
<div class="a" style="left:90px;top:735px;width:85px;height:11px;background:#3e3e3e;border:1px solid #222;box-sizing:border-box"></div>
<div class="a" style="left:175px;top:735px;width:11px;height:11px;background:#555"></div>
<div class="t" style="left:82px;top:734px;color:#aaa">&lt;</div><div class="t" style="left:178px;top:734px;color:#aaa">&gt;</div>
<div class="t" style="left:90px;top:735px;width:85px;text-align:center;color:#aaa">0 / 225</div>
<div class="a" style="left:113px;top:747px;width:5px;height:19px;background:#8a7a18"></div>
<svg class="a" style="left:84px;top:749px" width="18" height="16"><path d="M3 2h12v3H3zM2 8h14M5 5v3M13 5v3M3 11h12v3H3z" fill="#bbb" stroke="#999"/></svg>
<div class="tn" style="left:113px">0</div><div class="tn" style="left:160px">10</div><div class="tn" style="left:210px">20</div><div class="tn" style="left:260px">30</div><div class="tn" style="left:310px">40</div><div class="tn" style="left:360px">50</div><div class="tn" style="left:410px">60</div><div class="tn" style="left:460px">70</div><div class="tn" style="left:510px">80</div><div class="tn" style="left:560px">90</div><div class="tn" style="left:608px">100</div><div class="tn" style="left:658px">110</div><div class="tn" style="left:708px">120</div><div class="tn" style="left:758px">130</div><div class="tn" style="left:808px">140</div><div class="tn" style="left:858px">150</div><div class="tn" style="left:908px">160</div><div class="tn" style="left:958px">170</div><div class="tn" style="left:1008px">180</div><div class="tn" style="left:1058px">190</div><div class="tn" style="left:1108px">200</div><div class="tn" style="left:1158px">210</div><div class="tn" style="left:1208px">220</div>

<!-- status bar -->
<div class="a" style="left:79px;top:767px;width:1323px;height:32px;background:#444"></div>
<div class="a" style="left:80px;top:768px;width:67px;height:15px;background:#e0c0c4"></div>
<div class="a" style="left:80px;top:784px;width:67px;height:14px;background:#fff;color:#111;font:8px/14px 'Liberation Mono',monospace;white-space:nowrap;overflow:hidden;padding-left:2px;box-sizing:border-box">Max to Physc:</div>
<div class="box" style="left:152px;top:768px;width:664px;height:15px;padding-left:4px">1 Object Selected</div>
<div class="box" style="left:152px;top:785px;width:850px;height:14px;padding-left:4px">Click or click-and-drag to select objects</div>
<div class="t" style="left:853px;top:769px;color:#999">X:</div><div class="inp st" style="left:865px;top:769px;width:40px;height:13px;line-height:11px">-2346,356c</div>
<div class="t" style="left:914px;top:769px;color:#999">Y:</div><div class="inp st" style="left:922px;top:769px;width:39px;height:13px;line-height:11px">10555,558</div>
<div class="t" style="left:971px;top:769px;color:#999">Z:</div><div class="inp st" style="left:978px;top:769px;width:39px;height:13px;line-height:11px">0,0cm</div>
<div class="box" style="left:1028px;top:768px;width:69px;height:15px;padding-left:4px">Grid = 0,0cm</div>
<div class="a" style="left:1011px;top:785px;width:13px;height:14px;background:#3a7ed0"></div><div class="a" style="left:1014px;top:788px;width:7px;height:8px;background:#ddd"></div>
<div class="box" style="left:1028px;top:785px;width:69px;height:14px;padding-left:4px">Add Time Tag</div>
<div class="box" style="left:1100px;top:768px;width:28px;height:31px"></div>
<div class="box" style="left:1131px;top:768px;width:32px;height:15px;text-align:center;background:#4e4e4e">Auto Key</div>
<div class="box" style="left:1131px;top:785px;width:32px;height:14px;text-align:center;background:#4e4e4e">Set Key</div>
<div class="dd" style="left:1167px;top:768px;width:79px;height:13px;line-height:11px;background:#e4e4e4">Selected</div>
<div class="box" style="left:1185px;top:785px;width:61px;height:14px;text-align:center;background:#4e4e4e">Key Filters...</div>
<div class="box" style="left:1269px;top:785px;width:44px;height:13px;padding-left:2px;line-height:11px;background:#4e4e4e">0</div>
<svg class="a" style="left:0;top:0;pointer-events:none" width="1480" height="800">
<defs>
<pattern id="eye" x="145" y="329.300" width="12" height="13.100" patternUnits="userSpaceOnUse"><circle cx="6" cy="6.500" r="5" fill="#e8581c"/><circle cx="6" cy="6.500" r="3.200" fill="#fff"/><circle cx="6" cy="6.500" r="1.800" fill="#24408a"/></pattern>
<pattern id="ly" x="1104" y="417" width="146" height="13.100" patternUnits="userSpaceOnUse">
<path d="M3 7h10M30 7h10" stroke="#7a7a7a" stroke-width="1.500"/>
<path d="M62 6h7l1 2-2 3h-5l-2-3zM69 7l3-2M62 7l-2-1" fill="#e0e0e0" stroke="#e0e0e0" stroke-width=".5"/>
<path d="M122 12a6 6 0 0 1 12 0z" fill="#e8c850"/><path d="M128 3v3M123 4l1.500 3M133 4l-1.500 3" stroke="#111" stroke-width="1.100"/>
</pattern>
<pattern id="l1" x="1007" y="417" width="10" height="13.100" patternUnits="userSpaceOnUse"><path d="M1 4h7M2 6.500h6M1 9h7" stroke="#ddd"/><path d="M0 4h1M0 6.500h1M0 9h1" stroke="#111"/></pattern>
<pattern id="l2" x="1016" y="417" width="10" height="13.100" patternUnits="userSpaceOnUse"><circle cx="5" cy="6.500" r="3.300" fill="#ddd" stroke="#111" stroke-width=".7"/><path d="M5 3.500v6M2 6.500h6" stroke="#222" stroke-width=".7"/></pattern>
</defs>
<!-- asset toolbar -->
<rect x="97" y="257" width="10" height="10" fill="#d8d8d8"/><path d="M99 260h6v2h-6zM99 264h6" stroke="#1a9a4a" fill="#1a9a4a"/>
<rect x="118" y="256" width="8" height="12" fill="#eee"/><path d="M119 259h6M119 262h6M119 265h6" stroke="#888"/>
<rect x="135" y="257" width="10" height="10" fill="#d8d8d8"/><path d="M136 259h4v3h-4zM140 263h4v3h-4z" fill="#2a6a3a"/>
<rect x="151" y="254" width="17" height="17" fill="#3a7ed0" stroke="#1a1a1a"/><rect x="154" y="258" width="10" height="9" fill="#cde" stroke="#fff"/><path d="M154 261h10M154 264h10M157 258v9M160 258v9" stroke="#557" stroke-width=".7"/>
<circle cx="445" cy="262" r="4.500" fill="#2a60c0"/><path d="M446 258h4v2l-2 2v2h-1" fill="none" stroke="#ddd"/>
<circle cx="464" cy="261" r="4.500" fill="#999"/><path d="M465 258h4v2l-2 2v3h-1" fill="none" stroke="#eee"/>
<!-- asset tree icons -->
<path d="M114 293a4 3 0 0 1 8 0v2h-2v4h-4v-4h-2z" fill="#999"/>
<rect x="124.500" y="305.500" width="10" height="6" fill="#fff" stroke="#3a7ed0"/>
<path d="M137 322l4-5h5l-3 9h-5z" fill="#20b030" stroke="#111" stroke-width=".5"/>
<rect x="145" y="329.300" width="12" height="301.300" fill="url(#eye)"/>
<!-- title icons -->
<g fill="#1a8a88"><rect x="98" y="220" width="12" height="8"/><rect x="993" y="127" width="12" height="8"/><rect x="993" y="366" width="12" height="8"/></g>
<g fill="#222"><rect x="98" y="227" width="12" height="4"/><rect x="993" y="134" width="12" height="4"/><rect x="993" y="373" width="12" height="4"/></g>
<path d="M393 226h7" stroke="#ccc"/>
<g stroke="#888" fill="none"><rect x="423.500" y="222.500" width="7" height="7"/><path d="M455 222l8 8M463 222l-8 8"/><path d="M1250 129l8 8M1258 129l-8 8M1240 367l8 8M1248 367l-8 8"/></g>
<!-- material -->
<path d="M991 147h9l-4.500 3zM991 151h9l-1 1h-7zM991 153h9v1h-9z" fill="#111"/>
<circle cx="1005" cy="220" r="5" fill="#3a2018"/><circle cx="1005" cy="234" r="5" fill="#806850"/><circle cx="1005" cy="248" r="5" fill="#4a4a5a"/><circle cx="1005" cy="262" r="5" fill="#5a3a20"/><circle cx="1005" cy="276" r="5" fill="#4a4026"/><circle cx="1005" cy="290" r="5" fill="#3a3a20"/><circle cx="1005" cy="304" r="5" fill="#4a4026"/><circle cx="1005" cy="318" r="5" fill="#0a0a0a"/>
<path d="M1227 241l13-13h12v13zM1227 255l13-13h12v13z" fill="#a80808"/>
<!-- layer toolbar -->
<path d="M1000 388h9M1000 391h9M1000 394h9" stroke="#ddd"/><circle cx="1006" cy="396" r="1.500" fill="#e85a10"/>
<path d="M1021 387l9 9M1030 387l-9 9" stroke="#ccc" stroke-width="2.500"/>
<path d="M1046 387v9M1041.500 391.500h9" stroke="#ddd" stroke-width="1.500"/>
<rect x="1061" y="387" width="8" height="8" fill="#a8c8e8"/><path d="M1068 392l3 4" stroke="#fff"/>
<path d="M1083 388h7M1083 391h7M1083 394h7" stroke="#ddd"/><path d="M1088 391l4 5" stroke="#fff" stroke-width="1.500"/>
<path d="M1104 388h7M1104 391h7M1104 394h7" stroke="#ddd"/><path d="M1110 396v-5l2 2" stroke="#9cf" fill="none"/>
<path d="M1124 388h7M1124 391h7M1124 394h7" stroke="#ddd"/><circle cx="1130" cy="394" r="2.500" fill="#8cf"/>
<!-- layer header lines -->
<path d="M1084 402.500v15M1100 402.500v15M1124 402.500v15M1155 402.500v15M1187 402.500v15M1212 402.500v15" stroke="#ddd"/>
<path d="M1247 411l4-4 4 4" fill="none" stroke="#555" stroke-width="1.500"/>
<!-- layer rows -->
<rect x="1104" y="417" width="146" height="288.200" fill="url(#ly)"/>
<rect x="1007" y="417" width="10" height="65.500" fill="url(#l1)"/>
<rect x="1016" y="482.500" width="10" height="222.700" fill="url(#l2)"/>
<g fill="none" stroke="#777"><rect x="996.500" y="433.500" width="5" height="5"/><rect x="996.500" y="446.500" width="5" height="5"/><rect x="996.500" y="459.500" width="5" height="5"/><rect x="996.500" y="473.500" width="5" height="5"/></g>
<path d="M1086 424l2 2 4-5" fill="none" stroke="#111" stroke-width="1.200"/>
<g fill="none" stroke="#ccc" stroke-width="1.200"><rect x="1086" y="434" width="6" height="6" rx="1"/><rect x="1086" y="447" width="6" height="6" rx="1"/><rect x="1086" y="460" width="6" height="6" rx="1"/><rect x="1086" y="474" width="6" height="6" rx="1"/></g>
<rect x="1105" y="456" width="12" height="13" fill="#555"/><path d="M1111 459a2.500 2.500 0 0 1 2.500 2.500c0 1.500-1.500 2-1.500 4h-2c0-2-1.500-2.500-1.500-4a2.500 2.500 0 0 1 2.500-2.500z" fill="#b8d0d8"/>
<g stroke="#222" stroke-width=".6">
<rect x="1196" y="420" width="7" height="7" fill="#e070c0"/><rect x="1196" y="433" width="7" height="7" fill="#6a0a8a"/><rect x="1196" y="446" width="7" height="7" fill="#8ab0e0"/><rect x="1196" y="459" width="7" height="7" fill="#c080d8"/><rect x="1196" y="473" width="7" height="7" fill="#108a70"/><rect x="1196" y="486" width="7" height="7" fill="#d8b030"/><rect x="1196" y="499" width="7" height="7" fill="#d8b030"/><rect x="1196" y="512" width="7" height="7" fill="#40d8b0"/><rect x="1196" y="525" width="7" height="7" fill="#801040"/><rect x="1196" y="538" width="7" height="7" fill="#b030d0"/><rect x="1196" y="551" width="7" height="7" fill="#10a010"/><rect x="1196" y="564" width="7" height="7" fill="#806000"/><rect x="1196" y="577" width="7" height="7" fill="#901020"/><rect x="1196" y="590" width="7" height="7" fill="#30c0a0"/><rect x="1196" y="604" width="7" height="7" fill="#a01040"/><rect x="1196" y="617" width="7" height="7" fill="#a01030"/><rect x="1196" y="630" width="7" height="7" fill="#108830"/><rect x="1196" y="643" width="7" height="7" fill="#207010"/><rect x="1196" y="656" width="7" height="7" fill="#109010"/><rect x="1196" y="669" width="7" height="7" fill="#108810"/><rect x="1196" y="682" width="7" height="7" fill="#2050a0"/><rect x="1196" y="695" width="7" height="7" fill="#108010"/>
</g>
<!-- stack icons -->
<circle cx="1292" cy="129" r="2.800" fill="#fff"/><path d="M1290 132h4v2h-4z" fill="#ddd"/>
<circle cx="1292" cy="140" r="2.800" fill="#fff"/><path d="M1290 143h4v2h-4z" fill="#ddd"/>
<rect x="1301" y="138" width="6" height="6" fill="#111"/><rect x="1287" y="149" width="6" height="6" fill="#111"/>
<!-- dropdown chevrons -->
<g fill="none" stroke="#666"><path d="M1375 630l3 3 3-3M1376 702l3 3 3-3M1236 773l3 3 3-3"/><path d="M1376 733l3 3 3-3" stroke="#888"/></g>
<!-- status icons -->
<path d="M825 774h6v6h-6zM826 774v-2a2 2 0 0 1 4 0v2" fill="#ddd" stroke="#ddd" stroke-width=".6"/>
<rect x="842" y="771" width="8" height="9" fill="#ccc"/><path d="M846 771v9M842 775.500h8" stroke="#444"/>
<circle cx="1108" cy="783" r="3" fill="none" stroke="#111" stroke-width="1.500"/><path d="M1111 783h11M1118 783v3M1121 783v3" stroke="#111" stroke-width="1.500"/>
<path d="M1170 796q2-8 4-8t3 4l2 3" fill="none" stroke="#c83030" stroke-width="1.300"/>
<g fill="#c8c8c8" stroke="#c8c8c8" stroke-width=".6">
<path d="M1254 771v7M1259 771l-4 3.500 4 3.500zM1263 771l-4 3.500 4 3.500z" fill="none"/>
<path d="M1272 771v7M1275 771v7M1282 771l-5 3.500 5 3.500z"/>
<path d="M1288 771l6 3.500-6 3.500z" fill="none"/>
<path d="M1304 771l5 3.500-5 3.500zM1311 771v7M1314 771v7"/>
<path d="M1321 771l4 3.500-4 3.500zM1325 771l4 3.500-4 3.500zM1331 771v7" fill="none"/>
<path d="M1250 787v7M1255 787l-4 3.500 4 3.500zM1260 787l4 3.500-4 3.500zM1265 787v7" fill="none"/>
</g>
<g fill="#ddd"><circle cx="1345" cy="775" r="3.500"/><rect x="1362" y="770" width="4" height="4"/><rect x="1367" y="770" width="4" height="4"/><rect x="1362" y="775" width="4" height="4"/><rect x="1367" y="775" width="4" height="4"/></g>
<rect x="1383" y="771" width="6" height="6" fill="#60a060"/><path d="M1379 770h3M1379 770v3M1393 770h-3M1393 770v3M1379 780h3M1379 780v-3M1393 780h-3M1393 780v-3" stroke="#ccc" fill="none"/>
<rect x="1394" y="769" width="7" height="5" fill="#60a060"/><rect x="1391" y="775" width="7" height="5" fill="#ddd"/>
<path d="M1315 787h5v5h-5z" fill="#bbb"/><rect x="1328" y="786" width="10" height="10" fill="#ccd"/><rect x="1330" y="788" width="4" height="4" fill="#2a50a0"/>
<path d="M1346 786l10 5-10 5z" fill="none" stroke="#ccc"/>
<path d="M1364 796l-3-6 2 1-1-5 2 3v-4l2 4 1-3 1 4 2-2-2 7z" fill="#eee"/>
<circle cx="1382" cy="791" r="4" fill="none" stroke="#ccc"/><path d="M1382 787v4l3 2" stroke="#ddd" fill="none"/>
<rect x="1393" y="786" width="7" height="7" fill="#ccc"/>
</svg>
</div></body></html>
